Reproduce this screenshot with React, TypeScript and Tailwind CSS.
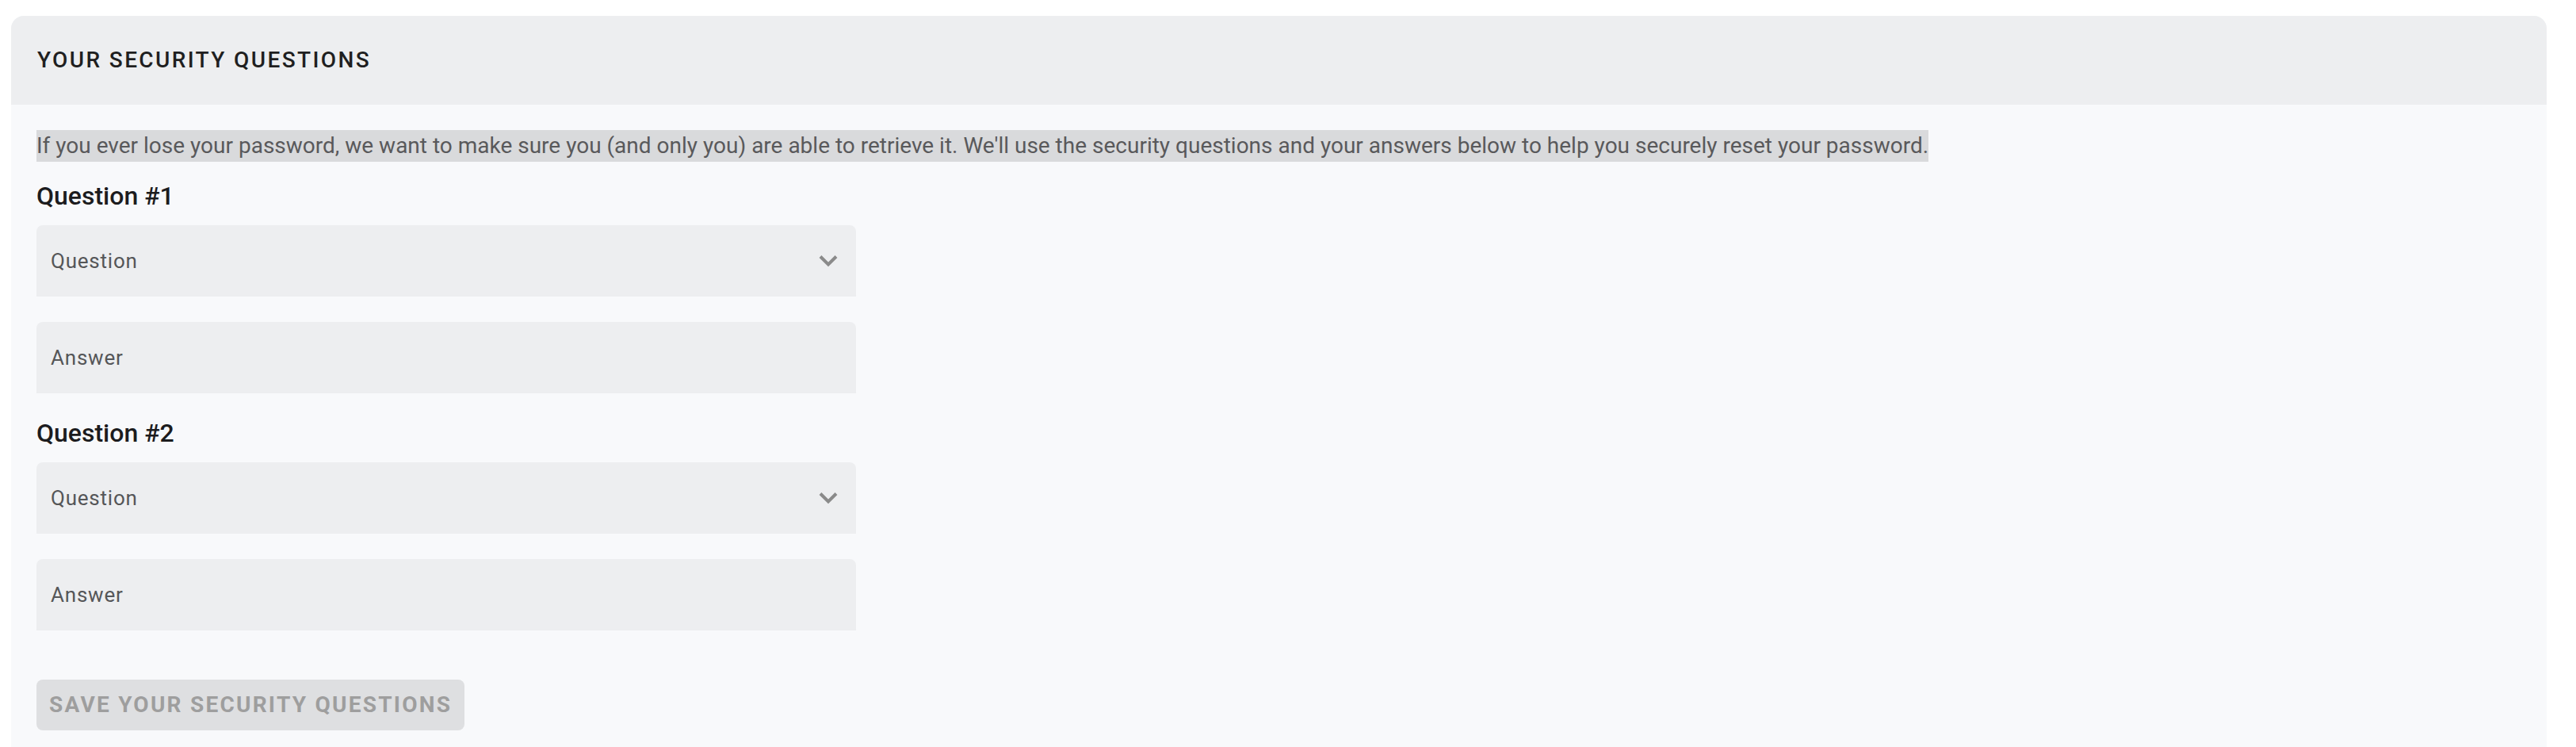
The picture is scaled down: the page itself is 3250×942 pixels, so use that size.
import React from 'react';

const Chevron = () => (
  <svg width="24" height="16" viewBox="0 0 24 16" fill="none" className="text-[#8a8a8a]">
    <path d="M2 2.5 L12 12.5 L22 2.5" stroke="currentColor" strokeWidth="4" />
  </svg>
);

const QuestionBlock: React.FC<{ n: number }> = ({ n }) => (
  <div className="flex flex-col">
    <h3 className="text-[32px] leading-[40px] font-medium text-[#1c1c1e]">Question #{n}</h3>
    <div className="mt-[17px] h-[90px] w-[1034px] rounded-t-[8px] bg-[#edeef0] pl-[18px] pr-[23px] flex items-center justify-between">
      <span className="text-[26px] tracking-[0.03em] text-[#555658]">Question</span>
      <Chevron />
    </div>
    <div className="mt-[32px] h-[90px] w-[1034px] rounded-t-[8px] bg-[#edeef0] pl-[18px] flex items-center">
      <span className="text-[26px] tracking-[0.03em] text-[#555658]">Answer</span>
    </div>
  </div>
);

export default function App() {
  return (
    <div className="bg-white pt-[20px] pl-[14px] font-['Roboto',sans-serif]">
      <div className="w-[3199px] h-[922px] rounded-t-[16px] overflow-hidden bg-[#f8f9fb]">
        <div className="h-[112px] bg-[#edeef0] pl-[33px] flex items-center">
          <h2 className="text-[28px] font-medium tracking-[0.085em] text-[#1f1f21]">YOUR SECURITY QUESTIONS</h2>
        </div>
        <div className="pl-[32px] pt-[32px] flex flex-col">
          <p className="w-fit bg-[#d9dadc] text-[28px] leading-[40px] text-[#59595b]">
            If you ever lose your password, we want to make sure you (and only you) are able to retrieve it. We'll use the security questions and your answers below to help you securely reset your password.
          </p>
          <div className="mt-[23px]">
            <QuestionBlock n={1} />
          </div>
          <div className="mt-[30px]">
            <QuestionBlock n={2} />
          </div>
          <button className="mt-[62px] w-fit h-[64px] rounded-[8px] bg-[#dedfe1] px-[16px] text-[28px] font-bold tracking-[0.08em] text-[#9e9e9e]">
            SAVE YOUR SECURITY QUESTIONS
          </button>
        </div>
      </div>
    </div>
  );
}
